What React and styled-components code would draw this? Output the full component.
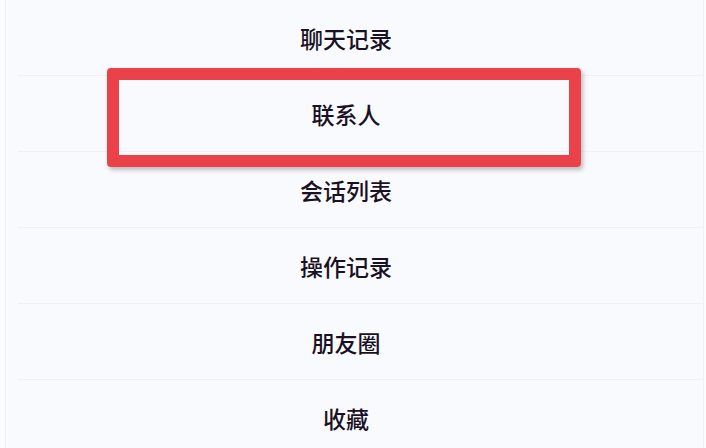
import React from 'react';
import styled, { createGlobalStyle } from 'styled-components';

const GlobalStyle = createGlobalStyle`
  html, body {
    margin: 0;
    padding: 0;
    background: #fbfcfe;
  }
`;

const Page = styled.div`
  width: 706px;
  height: 448px;
  padding-left: 5px;
  box-sizing: border-box;
  overflow: hidden;
  background: #fbfcfe;
`;

const Panel = styled.div`
  width: 699px;
  height: 100%;
  box-sizing: border-box;
  border-left: 1px solid #eef1f6;
  border-right: 1px solid #eef1f6;
  background: #f9fafd;
  display: flex;
  flex-direction: column;
`;

const Row = styled.div`
  position: relative;
  flex: 0 0 76px;
  display: flex;
  align-items: center;
  justify-content: center;
  padding-right: 17px;
  font-family: "Noto Sans CJK SC", "Noto Sans", sans-serif;
  font-size: 23px;
  font-weight: 500;
  color: #1a1224;

  &::after {
    content: '';
    position: absolute;
    left: 12px;
    right: 0;
    bottom: 0;
    height: 1px;
    background: ${props => (props.$last ? 'transparent' : '#eef1f6')};
  }
`;

const Highlight = styled.div`
  position: absolute;
  top: -8px;
  left: 101px;
  width: 474px;
  height: 99px;
  box-sizing: border-box;
  border: 12px solid #eb4249;
  border-radius: 4px;
  box-shadow: 2px 3px 4px rgba(60, 40, 50, 0.3);
  z-index: 1;
`;

const items = ['聊天记录', '联系人', '会话列表', '操作记录', '朋友圈', '收藏'];

export default function App() {
  return (
    <>
      <GlobalStyle />
      <Page>
        <Panel>
          {items.map((label, i) => (
            <Row key={label} $last={i === items.length - 1}>
              {label === '联系人' && <Highlight />}
              {label}
            </Row>
          ))}
        </Panel>
      </Page>
    </>
  );
}
